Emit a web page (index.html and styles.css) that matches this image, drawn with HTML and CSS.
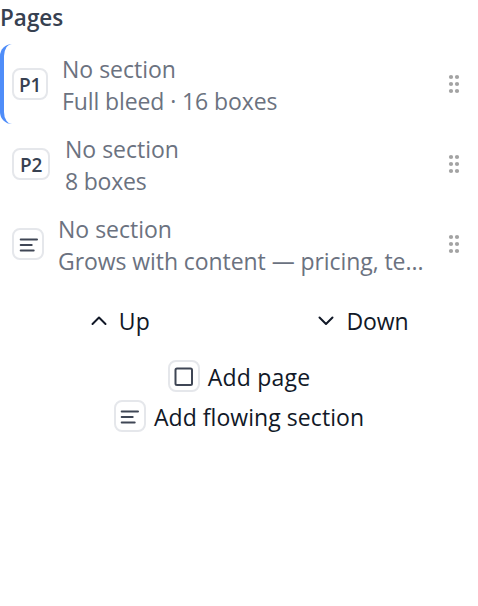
FILE: index.html
```
<!DOCTYPE html>
<html lang="en">
<head>
<meta charset="utf-8">
<title>Pages</title>
<link rel="stylesheet" href="styles.css">
</head>
<body>
<svg class="defs" aria-hidden="true">
  <symbol id="lines" viewBox="0 0 20 20"><path d="M2.700 5.500h16.300M2.700 11h11M2.700 16.500h13"/></symbol>
  <symbol id="grip" viewBox="0 0 12 20"><circle cx="3" cy="3" r="2.100"/><circle cx="9" cy="3" r="2.100"/><circle cx="3" cy="10" r="2.100"/><circle cx="9" cy="10" r="2.100"/><circle cx="3" cy="17" r="2.100"/><circle cx="9" cy="17" r="2.100"/></symbol>
</svg>
<main class="panel">
  <h2 class="title">Pages</h2>
  <ul class="pages">
    <li class="page active">
      <span class="badge label first">P1</span>
      <div class="info"><div class="line section">No section</div><div class="line detail-one">Full bleed · 16 boxes</div></div>
      <svg class="grip"><use href="#grip"/></svg>
    </li>
    <li class="page">
      <span class="badge label second">P2</span>
      <div class="info"><div class="line section">No section</div><div class="line detail-two">8 boxes</div></div>
      <svg class="grip"><use href="#grip"/></svg>
    </li>
    <li class="page">
      <span class="badge"><svg class="icon"><use href="#lines"/></svg></span>
      <div class="info"><div class="line section">No section</div><div class="line detail-three">Grows with content — pricing, te...</div></div>
      <svg class="grip"><use href="#grip"/></svg>
    </li>
  </ul>
  <div class="moves">
    <button class="action"><svg class="chevron" viewBox="0 0 16 10"><path d="M1.500 8 8 1.500 14.500 8"/></svg><span class="up">Up</span></button>
    <button class="action"><svg class="chevron" viewBox="0 0 16 10"><path d="M1.500 1.500 8 8l6.500-6.500"/></svg><span class="down">Down</span></button>
  </div>
  <div class="adds">
    <button class="action add"><span class="badge"><svg class="icon" viewBox="0 0 20 20"><rect x="1.500" y="2.500" width="16.500" height="16.500" rx="1.500"/></svg></span><span class="add-page">Add page</span></button>
    <button class="action add"><span class="badge"><svg class="icon" viewBox="1 0 20 20"><path d="M2.700 5.500h16.300M2.700 11h11M2.700 16.500h13"/></svg></span><span class="add-flow">Add flowing section</span></button>
  </div>
</main>
</body>
</html>
```
FILE: styles.css
```
* { box-sizing: border-box; }
body { margin: 0; background: #fff; font-family: "Open Sans", sans-serif; font-size: 23px; line-height: 32px; color: #111827; overflow: hidden; }
.defs { position: absolute; width: 0; height: 0; }
.panel { width: 478px; }
.title { margin: 0; height: 44px; padding-top: 2px; font-size: 22.500px; font-weight: 600; line-height: 32px; letter-spacing: 0; color: #374151; }
.pages { list-style: none; margin: 0; padding: 0; }
.page { display: flex; align-items: center; height: 80px; padding: 0 18px 0 8px; border-left: 4px solid transparent; border-radius: 12px; }
.active { border-left-color: #4f8df9; }
.badge { flex: none; display: flex; align-items: center; justify-content: center; width: 32px; height: 32px; border: 2px solid #e5e7eb; border-radius: 8px; background: #fff; color: #374151; }
.label { font-size: 19px; font-weight: 600; line-height: 28px; letter-spacing: -.3px; padding-top: 2px; }
.first { width: 36px; }
.second { width: 38px; }
.icon { width: 20px; height: 20px; fill: none; stroke: #3f4655; stroke-width: 2; stroke-linecap: round; }
.info { flex: 1; min-width: 0; margin-left: 14px; color: #6b7280; }
.second + .info { margin-left: 15px; }
.line { white-space: nowrap; padding-top: 1px; height: 32px; }
.section { letter-spacing: 0; }
.detail-one { letter-spacing: -.1px; }
.detail-two { letter-spacing: -.2px; }
.detail-three { letter-spacing: -.07px; }
.grip { flex: none; width: 12px; height: 20px; fill: #a3a3a3; }
.moves { display: grid; grid-template-columns: 1fr 1fr; gap: 8px; margin: 20px -3px 17px 3px; }
.action { display: flex; align-items: center; justify-content: center; gap: 12px; border: 0; padding: 0; height: 36px; background: none; font: inherit; color: inherit; white-space: nowrap; }
.moves .action { padding-bottom: 2px; }
.chevron { width: 16px; height: 10px; fill: none; stroke: #111827; stroke-width: 2; stroke-linecap: round; stroke-linejoin: round; }
.up { letter-spacing: .3px; }
.down { letter-spacing: -.1px; }
.adds { display: flex; flex-direction: column; }
.add { height: 40px; gap: 8px; }
.add .badge { margin-bottom: 3px; }
.add-page { letter-spacing: .2px; }
.add-flow { letter-spacing: .06px; }
```
